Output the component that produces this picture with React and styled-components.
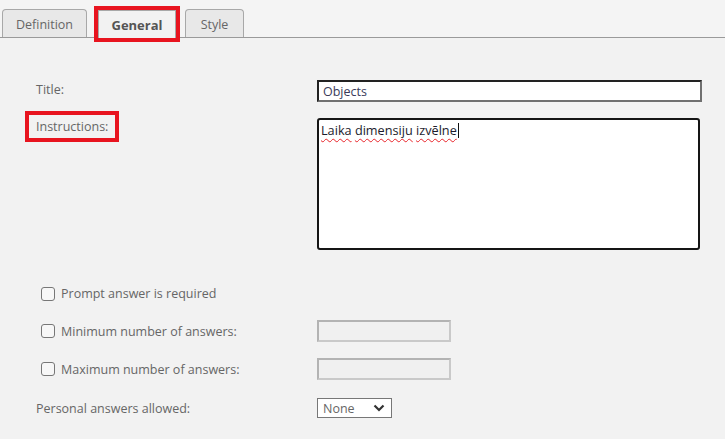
import React from "react";
import styled, { createGlobalStyle } from "styled-components";

const GlobalStyle = createGlobalStyle`
  html, body {
    margin: 0;
    padding: 0;
    background: #f2f2f2;
  }
  body {
    font-family: "Open Sans", "Noto Sans", sans-serif;
    font-size: 12.5px;
    color: #666;
  }
`;

const mark = "4px solid #e8141f";

const Page = styled.div`
  width: 725px;
  height: 439px;
  overflow: hidden;
  background: #f2f2f2;
`;

const TabBar = styled.div`
  display: flex;
  align-items: flex-end;
  height: 38px;
  padding-left: 2px;
  border-bottom: 1px solid #9a9a9a;
  background: #f4f4f4;
  box-sizing: border-box;
`;

const Tab = styled.div`
  box-sizing: border-box;
  height: 28px;
  width: ${(p) => p.w}px;
  margin-right: ${(p) => p.gap}px;
  margin-bottom: ${(p) => (p.active ? "-1px" : "0")};
  display: flex;
  align-items: center;
  justify-content: center;
  padding-top: 1px;
  border: 1px solid #a8a8a8;
  border-bottom: ${(p) => (p.active ? "none" : "0")};
  border-radius: ${(p) => (p.marked ? "0" : "4px 4px 0 0")};
  background: ${(p) => (p.active ? "#f2f2f2" : "#e8e8e8")};
  color: ${(p) => (p.active ? "#555" : "#666")};
  font-size: ${(p) => (p.active ? "13px" : "12.5px")};
  font-weight: ${(p) => (p.active ? 700 : 400)};
  outline: ${(p) => (p.marked ? mark : "none")};
`;

const Form = styled.div`
  padding: 0 0 0 36px;
`;

const Row = styled.div`
  display: grid;
  grid-template-columns: 281px auto;
  align-items: ${(p) => p.align || "start"};
  margin-top: ${(p) => p.top}px;
`;

const Label = styled.div`
  justify-self: start;
  color: #666;
  padding-top: ${(p) => p.pad || 0}px;
  ${(p) =>
    p.marked &&
    `
    outline: ${mark};
    margin-left: -7px;
    padding: 3px 7px 3px 7px;
    margin-top: -3px;
  `}
`;

const TextInput = styled.div`
  box-sizing: border-box;
  width: 385px;
  height: 22px;
  padding: 2px 4px;
  background: #fff;
  border: 2px solid;
  border-color: #222 #707070 #707070 #222;
  font-size: 12.5px;
  color: #3a3a5a;
  line-height: 16px;
`;

const TextArea = styled.div`
  box-sizing: border-box;
  width: 383px;
  height: 132px;
  padding: 1px 2px;
  background: #fff;
  border: 2px solid #151515;
  border-radius: 3px;
  font-size: 12.7px;
  color: #1c1c2c;
  line-height: 18px;
`;

// spell-check squiggle under each word
const Misspelt = styled.span`
  text-decoration: underline wavy #e8242a;
  text-decoration-thickness: 1.2px;
  text-underline-offset: 3px;
`;

const Caret = styled.span`
  display: inline-block;
  width: 1px;
  height: 15px;
  margin-left: 1px;
  vertical-align: -3px;
  background: #111;
`;

const CheckLabel = styled.label`
  display: flex;
  align-items: center;
  gap: 6px;
  margin-left: 5px;
  color: #666;
`;

const Box = styled.span`
  box-sizing: border-box;
  width: 14px;
  height: 14px;
  border: 1px solid #777;
  border-radius: 3px;
  background: #f7f7f7;
`;

const NumberInput = styled.div`
  box-sizing: border-box;
  width: 134px;
  height: 22px;
  background: #f0f0f0;
  border: 2px solid;
  border-color: #b3b3b3 #c9c9c9 #c9c9c9 #b3b3b3;
`;

const Select = styled.div`
  box-sizing: border-box;
  width: 75px;
  height: 20px;
  display: flex;
  align-items: center;
  justify-content: space-between;
  padding: 0 6px 0 5px;
  background: #fff;
  border: 1px solid #777;
  color: #666;
  font-size: 12.5px;
`;

const Chevron = () => (
  <svg width="12" height="8" viewBox="0 0 12 8">
    <path d="M1.5 1.5 L6 6 L10.5 1.5" fill="none" stroke="#333" strokeWidth="2.2" />
  </svg>
);

const tabs = [
  { name: "Definition", w: 85, gap: 11 },
  { name: "General", w: 78, gap: 9, active: true, marked: true },
  { name: "Style", w: 59, gap: 0 },
];

const checks = [
  { text: "Prompt answer is required", top: 35 },
  { text: "Minimum number of answers:", top: 18, input: true },
  { text: "Maximum number of answers:", top: 16, input: true },
];

export default function App() {
  return (
    <Page>
      <GlobalStyle />
      <TabBar>
        {tabs.map((t) => (
          <Tab key={t.name} w={t.w} gap={t.gap} active={t.active} marked={t.marked}>
            {t.name}
          </Tab>
        ))}
      </TabBar>

      <Form>
        <Row top={42}>
          <Label pad={1}>Title:</Label>
          <TextInput>Objects</TextInput>
        </Row>
        <Row top={16}>
          <Label marked>Instructions:</Label>
          <TextArea>
            <Misspelt>Laika</Misspelt> <Misspelt>dimensiju</Misspelt>{" "}
            <Misspelt>izvēlne</Misspelt>
            <Caret />
          </TextArea>
        </Row>

        {checks.map((c) => (
          <Row key={c.text} top={c.top} align="center">
            <CheckLabel>
              <Box />
              {c.text}
            </CheckLabel>
            {c.input ? <NumberInput /> : null}
          </Row>
        ))}

        <Row top={18} align="center">
          <Label>Personal answers allowed:</Label>
          <Select>
            None
            <Chevron />
          </Select>
        </Row>
      </Form>
    </Page>
  );
}
